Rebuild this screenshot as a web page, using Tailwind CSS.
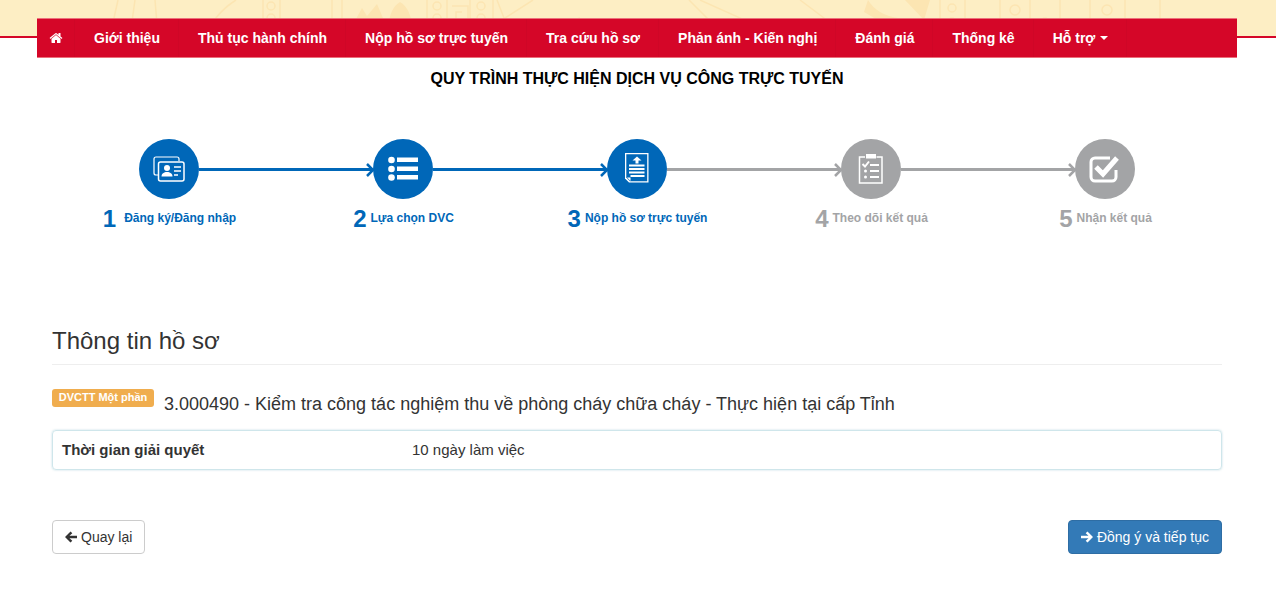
<!DOCTYPE html>
<html lang="en">
<head>
  <meta charset="UTF-8">
  <title>Quy trình thực hiện dịch vụ công trực tuyến</title>
  <script src="https://cdn.jsdelivr.net/npm/@tailwindcss/browser@4"></script>
</head>
<body class="bg-white font-['Liberation_Sans',Arial,sans-serif] text-[14px] text-[#333] overflow-x-hidden">

  <!-- header banner -->
  <header class="relative h-[58px]">
    <div class="absolute inset-x-0 top-0 h-[38px] bg-[#fdeec4] border-b-2 border-[#d50628] overflow-hidden">
      <svg class="absolute left-0 top-0" width="1276" height="36" viewBox="0 0 1276 36" fill="none" stroke="#fce5b2" stroke-width="1.500">
        <path d="M110 36L118 0M130 36L135 0M155 0L158 36M205 36C212 22 220 10 236 0"/>
        <path d="M263 0V36M280 0V36M332 0V36M342 0V36M427 0V36M447 0V36M470 0V36M493 0V36"/>
        <circle cx="271" cy="6" r="4"/><circle cx="271" cy="18" r="4"/><circle cx="271" cy="30" r="4"/>
        <circle cx="437" cy="6" r="4"/><circle cx="437" cy="18" r="4"/><circle cx="481" cy="6" r="4"/><circle cx="481" cy="18" r="4"/>
        <path d="M452 6h16v14h-12v-8h6M497 0l14 36M505 18l28-18M527 36l56-17v-1M540 30l40-12"/>
        <path d="M689 0l30 30 60 6M700 0l80 36M800 0l40 30"/>
        <path d="M940 0V36M965 0V36M1000 0V36M1030 0V36M1060 0V36M1090 0V36M1125 0V36M1160 0V36"/>
        <circle cx="952" cy="8" r="4"/><circle cx="952" cy="22" r="4"/><circle cx="1015" cy="10" r="5"/><circle cx="1045" cy="22" r="4"/><circle cx="1107" cy="10" r="5"/>
      </svg>
      <svg class="absolute left-0 top-0" width="1276" height="36" viewBox="0 0 1276 36" fill="#fce5b2">
        <path d="M350 36c2-12 8-20 12-28l5 8 10-12 6 14-8 18zM392 36c-6-12-2-28 8-34 10 6 14 20 10 34zM868 0c6 10 16 16 30 18l-10 8-24-14zM905 0h25l-6 20z"/>
      </svg>
    </div>
    <nav class="absolute left-[37px] top-[18px] w-[1200px] h-[40px] bg-[#d50628] border-y border-y-[#ec6f7b] flex text-white font-bold">
      <a class="w-[38px] flex items-center justify-center border-r border-[#cf0627]">
        <svg class="w-[14px] h-[14px]" viewBox="0 0 1792 1792" fill="currentColor"><path d="M1472 992v480q0 26-19 45t-45 19h-384v-384H768v384H384q-26 0-45-19t-19-45V992q0-1 .5-3t.5-3l575-474 575 474q1 2 1 6zm223-69l-62 74q-8 9-21 11h-3q-13 0-21-7L896 424 204 1001q-12 8-24 7-13-2-21-11l-62-74q-8-10-7-23.500t11-21.500l719-599q32-26 76-26t76 26l244 204V288q0-14 9-23t23-9h192q14 0 23 9t9 23v408l219 182q10 8 11 21.500t-7 23.500z"/></svg>
      </a>
      <a class="pl-[19px] pr-[18px] leading-[38px] border-r border-[#cf0627]">Giới thiệu</a>
      <a class="pl-[19px] pr-[18px] leading-[38px] border-r border-[#cf0627]">Thủ tục hành chính</a>
      <a class="pl-[19px] pr-[18px] leading-[38px] border-r border-[#cf0627]">Nộp hồ sơ trực tuyến</a>
      <a class="pl-[19px] pr-[18px] leading-[38px] border-r border-[#cf0627]">Tra cứu hồ sơ</a>
      <a class="pl-[19px] pr-[18px] leading-[38px] border-r border-[#cf0627]">Phản ánh - Kiến nghị</a>
      <a class="pl-[19px] pr-[18px] leading-[38px] border-r border-[#cf0627]">Đánh giá</a>
      <a class="pl-[19px] pr-[18px] leading-[38px] border-r border-[#cf0627]">Thống kê</a>
      <a class="pl-[19px] pr-[18px] leading-[38px] border-r border-[#cf0627] flex items-center gap-[5px]">Hỗ trợ <span class="w-0 h-0 border-x-[4px] border-x-transparent border-t-[4px] border-t-white"></span></a>
    </nav>
  </header>

  <main class="w-[1170px] ml-[52px]">
    <h1 class="mt-[12px] text-[16px] leading-[18px] font-bold text-black text-center">QUY TRÌNH THỰC HIỆN DỊCH VỤ CÔNG TRỰC TUYẾN</h1>

    <!-- steps -->
    <ol class="mt-[51px] grid grid-cols-5 font-bold">
      <li class="relative flex flex-col items-center text-[#0067b8]">
        <div class="absolute left-[147px] top-[29px] w-[174px] h-[3px] bg-[#0067b8]"></div>
        <svg class="absolute left-[314px] top-[24px]" width="9" height="14" viewBox="0 0 9 14" fill="none" stroke="#0067b8" stroke-width="2.500"><path d="M1 1l6 6-6 6"/></svg>
        <div class="w-[60px] h-[60px] rounded-full bg-[#0067b8]">
          <svg width="60" height="60" viewBox="0 0 60 60" fill="none" stroke="#fff">
            <path d="M19 36h-2a2 2 0 0 1-2-2V20a2 2 0 0 1 2-2h21a2 2 0 0 1 2 2v2" stroke-width="1.200"/>
            <rect x="19.500" y="23" width="25.500" height="19" rx="2" stroke-width="1.500"/>
            <circle cx="28" cy="29" r="3" fill="#fff" stroke="none"/>
            <path d="M22.500 37.500c0-3 2.500-4.500 5.500-4.500s5.500 1.500 5.500 4.500z" fill="#fff" stroke="none"/>
            <path d="M35 28h7M35 32h7M35 36h4" stroke-width="1.500"/>
          </svg>
        </div>
        <div class="mt-[6px] ml-[1px] h-[28px] flex items-center gap-[8px]"><span class="text-[24px] leading-[28px]">1</span><span class="text-[12px] mb-[2px]">Đăng ký/Đăng nhập</span></div>
      </li>
      <li class="relative flex flex-col items-center text-[#0067b8]">
        <div class="absolute left-[147px] top-[29px] w-[174px] h-[3px] bg-[#0067b8]"></div>
        <svg class="absolute left-[314px] top-[24px]" width="9" height="14" viewBox="0 0 9 14" fill="none" stroke="#0067b8" stroke-width="2.500"><path d="M1 1l6 6-6 6"/></svg>
        <div class="w-[60px] h-[60px] rounded-full bg-[#0067b8]">
          <svg width="60" height="60" viewBox="0 0 60 60" fill="#fff">
            <circle cx="18.500" cy="21" r="3.300"/><circle cx="18.500" cy="30" r="3.300"/><circle cx="18.500" cy="38.500" r="3.300"/>
            <rect x="24" y="18.500" width="21" height="4.500"/><rect x="24" y="27.500" width="21" height="4.500"/><rect x="24" y="36" width="21" height="4.500"/>
          </svg>
        </div>
        <div class="mt-[6px] ml-[1px] h-[28px] flex items-center gap-[4px]"><span class="text-[24px] leading-[28px]">2</span><span class="text-[12px] mb-[2px]">Lựa chọn DVC</span></div>
      </li>
      <li class="relative flex flex-col items-center text-[#0067b8]">
        <div class="absolute left-[147px] top-[29px] w-[174px] h-[3px] bg-[#a3a4a6]"></div>
        <svg class="absolute left-[314px] top-[24px]" width="9" height="14" viewBox="0 0 9 14" fill="none" stroke="#a3a4a6" stroke-width="2.500"><path d="M1 1l6 6-6 6"/></svg>
        <div class="w-[60px] h-[60px] rounded-full bg-[#0067b8]">
          <svg width="60" height="60" viewBox="0 0 60 60">
            <path d="M18 14h23.500v29.500H22l-4-4z" fill="#fff"/>
            <path d="M19.300 15.300h20.900v26.900H23l-3.700-3.700z" fill="#0067b8"/>
            <path d="M20 38.500l3.500 3.500v-3.500z" fill="#fff"/>
            <path d="M22 25.500h15.500v2H22zM22 29h15.500v2H22zM22 32.500h15.500v2H22zM23.500 36h14v2h-14zM30 17.500l4.500 4h-3v3h-3v-3h-3z" fill="#fff"/>
          </svg>
        </div>
        <div class="mt-[6px] ml-[1px] h-[28px] flex items-center gap-[4px]"><span class="text-[24px] leading-[28px]">3</span><span class="text-[12px] mb-[2px]">Nộp hồ sơ trực tuyến</span></div>
      </li>
      <li class="relative flex flex-col items-center text-[#a3a4a6]">
        <div class="absolute left-[147px] top-[29px] w-[174px] h-[3px] bg-[#a3a4a6]"></div>
        <svg class="absolute left-[314px] top-[24px]" width="9" height="14" viewBox="0 0 9 14" fill="none" stroke="#a3a4a6" stroke-width="2.500"><path d="M1 1l6 6-6 6"/></svg>
        <div class="w-[60px] h-[60px] rounded-full bg-[#a3a4a6]">
          <svg width="60" height="60" viewBox="0 0 60 60" fill="none" stroke="#fff" stroke-width="1.500">
            <path d="M24 18h-5.500v26h22.500V18h-5.500"/>
            <rect x="25" y="15" width="10" height="4.500" fill="#fff" stroke="none"/>
            <path d="M21.500 25l2.500 2.500 4-5" stroke-width="2"/>
            <path d="M29 26h9M29 32h9M29 38h9" stroke-width="1.800"/>
            <circle cx="24.500" cy="32" r="1.500" fill="#fff" stroke="none"/>
            <circle cx="24.500" cy="38" r="1.500" fill="#fff" stroke="none"/>
          </svg>
        </div>
        <div class="mt-[6px] ml-[1px] h-[28px] flex items-center gap-[4px]"><span class="text-[24px] leading-[28px]">4</span><span class="text-[12px] mb-[2px]">Theo dõi kết quả</span></div>
      </li>
      <li class="flex flex-col items-center text-[#a3a4a6]">
        <div class="w-[60px] h-[60px] rounded-full bg-[#a3a4a6]">
          <svg width="60" height="60" viewBox="0 0 60 60" fill="none" stroke="#fff" stroke-width="3">
            <path d="M41 31v7a4 4 0 0 1-4 4H20a4 4 0 0 1-4-4V23a4 4 0 0 1 4-4h15"/>
            <path d="M21 28l7 7 14-16" stroke-width="5"/>
          </svg>
        </div>
        <div class="mt-[6px] ml-[1px] h-[28px] flex items-center gap-[4px]"><span class="text-[24px] leading-[28px]">5</span><span class="text-[12px] mb-[2px]">Nhận kết quả</span></div>
      </li>
    </ol>

    <!-- thông tin hồ sơ -->
    <section class="mt-[95px]">
      <h2 class="text-[24px] leading-[26px] pb-[10px] border-b border-[#eee]">Thông tin hồ sơ</h2>
      <div class="mt-[24px] flex items-start">
        <span class="h-[18px] w-[102px] rounded-[3px] bg-[#f0ad4e] text-white text-[11px] leading-[17px] font-bold text-center">DVCTT Một phần</span>
        <span class="ml-[10px] mt-[5px] text-[18px] leading-[20px]">3.000490 - Kiểm tra công tác nghiệm thu về phòng cháy chữa cháy - Thực hiện tại cấp Tỉnh</span>
      </div>
      <div class="mt-[16px] h-[40px] px-[9px] border border-[#cfe6eb] rounded-[4px] shadow-[0_0_2px_rgba(120,180,195,0.5)] flex items-center text-[15px]">
        <strong class="w-[350px]">Thời gian giải quyết</strong>
        <span>10 ngày làm việc</span>
      </div>
      <div class="mt-[50px] flex justify-between">
        <button class="h-[34px] px-[12px] border border-[#ccc] rounded-[4px] bg-white flex items-center gap-[4px]">
          <svg class="w-[12px] h-[12px]" viewBox="0 0 12 12" fill="#333"><path d="M0 6l5.500-5.500 1.800 1.800L4.500 4.700H12v2.600H4.500l2.800 2.400-1.800 1.800z"/></svg>
          Quay lại
        </button>
        <button class="h-[34px] px-[12px] border border-[#2e6da4] rounded-[4px] bg-[#337ab7] text-white flex items-center gap-[4px]">
          <svg class="w-[12px] h-[12px]" viewBox="0 0 12 12" fill="#fff"><path d="M12 6L6.500.5 4.700 2.300l2.800 2.400H0v2.600h7.500L4.700 9.700l1.800 1.800z"/></svg>
          Đồng ý và tiếp tục
        </button>
      </div>
    </section>
  </main>
</body>
</html>
